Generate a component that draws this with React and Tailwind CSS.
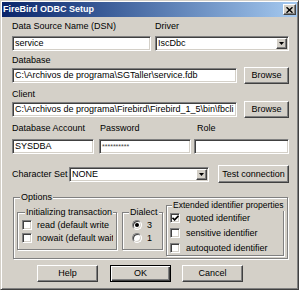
import React from "react";

const sunken =
  "bg-white border border-t-[#808080] border-l-[#808080] border-r-white border-b-white shadow-[inset_1px_1px_0_#404040,inset_-1px_-1px_0_#d4d0c8]";
const raised =
  "bg-[#d4d0c8] border border-t-white border-l-white border-r-[#404040] border-b-[#404040] shadow-[inset_-1px_-1px_0_#808080]";
const etched =
  "relative border border-[#808080] shadow-[inset_1px_1px_0_#ffffff,1px_1px_0_#ffffff]";

function TextBox({ className = "", children }) {
  return (
    <div className={`${sunken} min-w-0 h-[15px] flex items-center pl-[2px] overflow-hidden whitespace-nowrap ${className}`}>
      {children}
    </div>
  );
}

function Arrow() {
  return (
    <svg width="5" height="3" viewBox="0 0 5 3">
      <polygon points="0,0 5,0 2.5,3" fill="#000" />
    </svg>
  );
}

function Combo({ className = "", children }) {
  return (
    <div className={`${sunken} min-w-0 h-[15px] flex items-center pl-[2px] pr-[1px] ${className}`}>
      <span className="flex-1 min-w-0 overflow-hidden whitespace-nowrap">{children}</span>
      <div className={`${raised} w-[11px] h-[11px] flex items-center justify-center`}>
        <Arrow />
      </div>
    </div>
  );
}

function Button({ className = "", children }) {
  return (
    <div className={`${raised} flex items-center justify-center whitespace-nowrap ${className}`}>{children}</div>
  );
}

function Check({ checked }) {
  return (
    <div className={`${sunken} w-[10px] h-[10px] shrink-0 flex items-center justify-center`}>
      {checked && (
        <svg width="7" height="6" viewBox="0 0 7 6">
          <path d="M0.5 2.8 L2.6 4.9 L6.5 0.8" stroke="#000" strokeWidth="1.6" fill="none" />
        </svg>
      )}
    </div>
  );
}

function Radio({ checked }) {
  return (
    <div className="w-[10px] h-[10px] shrink-0 rounded-full bg-white border border-t-[#808080] border-l-[#808080] border-r-white border-b-white shadow-[inset_1px_1px_0_#404040,inset_-1px_-1px_0_#d4d0c8] flex items-center justify-center">
      {checked && <div className="w-[4px] h-[4px] rounded-full bg-black" />}
    </div>
  );
}

function Legend({ className = "", children }) {
  return (
    <span className={`absolute top-[-6px] px-[1px] bg-[#d4d0c8] whitespace-nowrap leading-[11px] ${className}`}>
      {children}
    </span>
  );
}

export default function App() {
  return (
    <div className="w-[300px] h-[293px] bg-white font-['Liberation_Sans',Arial,sans-serif] text-[9px] leading-[11px] text-black">
      <div className="w-[299px] h-[290px] bg-[#d4d0c8] border border-t-[#d4d0c8] border-l-[#d4d0c8] border-r-[#404040] border-b-[#404040] shadow-[inset_1px_1px_0_#ffffff,inset_-1px_-1px_0_#808080] p-[1px] flex flex-col">
        {/* Title bar */}
        <div className="h-[15px] bg-linear-to-r from-[#0a246a] to-[#a6caf0] flex items-center justify-between pl-[1px] pr-[1px]">
          <span className="text-white font-bold">FireBird ODBC Setup</span>
          <div className={`${raised} w-[13px] h-[11px] flex items-center justify-center`}>
            <svg width="7" height="6" viewBox="0 0 7 6">
              <path d="M0.5 0.3 L6.5 5.7 M6.5 0.3 L0.5 5.7" stroke="#000" strokeWidth="1.5" />
            </svg>
          </div>
        </div>

        {/* Content */}
        <div className="pl-[10px] pr-[8px] flex flex-col">
          <div className="mt-[4px] flex h-[11px]">
            <span className="w-[143px]">Data Source Name (DSN)</span>
            <span>Driver</span>
          </div>
          <div className="mt-[4px] flex">
            <TextBox className="w-[139px]">service</TextBox>
            <Combo className="ml-[4px] flex-1">IscDbc</Combo>
          </div>

          <div className="mt-[4px] h-[11px]">Database</div>
          <div className="mt-[1px] flex items-center h-[17px]">
            <TextBox className="flex-1">C:\Archivos de programa\SGTaller\service.fdb</TextBox>
            <Button className="ml-[7px] w-[45px] shrink-0 h-[17px]">Browse</Button>
          </div>

          <div className="mt-[5px] h-[11px]">Client</div>
          <div className="mt-[1px] flex items-center h-[17px]">
            <TextBox className="flex-1">C:\Archivos de programa\Firebird\Firebird_1_5\bin\fbcli</TextBox>
            <Button className="ml-[7px] w-[45px] shrink-0 h-[17px]">Browse</Button>
          </div>

          <div className="mt-[5px] flex h-[11px]">
            <span className="w-[88px]">Database Account</span>
            <span className="w-[97px]">Password</span>
            <span>Role</span>
          </div>
          <div className="mt-[5px] flex">
            <TextBox className="w-[82px]">SYSDBA</TextBox>
            <TextBox className="ml-[5px] w-[92px] text-[7px] text-[#404040]">**********</TextBox>
            <TextBox className="ml-[3px] flex-1"></TextBox>
          </div>

          <div className="mt-[11px] flex items-center h-[18px]">
            <span className="w-[57px]">Character Set</span>
            <Combo className="w-[140px]">NONE</Combo>
            <Button className="ml-[9px] flex-1 h-[18px]">Test connection</Button>
          </div>

          {/* Options */}
          <div className={`${etched} mt-[14px] ml-[1px] w-[275px] h-[62px]`}>
            <Legend className="left-[6px]">Options</Legend>
            <div className="flex items-start pl-[3px] pt-[7px]">
              <div className={`${etched} mt-[7px] w-[100px] h-[38px]`}>
                <Legend className="left-[7px]">Initializing transaction</Legend>
                <div className="flex flex-col pt-[7px] pl-[4px] gap-[3px]">
                  <div className="flex items-center h-[10px]">
                    <Check />
                    <span className="ml-[5px] w-[76px] overflow-hidden whitespace-nowrap">read (default write</span>
                  </div>
                  <div className="flex items-center h-[10px]">
                    <Check />
                    <span className="ml-[5px] w-[76px] overflow-hidden whitespace-nowrap">nowait (default wait</span>
                  </div>
                </div>
              </div>

              <div className={`${etched} ml-[5px] mt-[7px] w-[41px] h-[38px]`}>
                <Legend className="left-[6px]">Dialect</Legend>
                <div className="flex flex-col pt-[7px] pl-[9px] gap-[3px]">
                  <div className="flex items-center h-[10px]">
                    <Radio checked />
                    <span className="ml-[5px]">3</span>
                  </div>
                  <div className="flex items-center h-[10px]">
                    <Radio />
                    <span className="ml-[5px]">1</span>
                  </div>
                </div>
              </div>

              <div className={`${etched} ml-[3px] w-[118px] h-[51px]`}>
                <Legend className="left-[5px] text-[8.5px]">Extended identifier properties</Legend>
                <div className="flex flex-col pt-[7px] pl-[3px] gap-[5px]">
                  <div className="flex items-center h-[10px]">
                    <Check checked />
                    <span className="ml-[6px] whitespace-nowrap">quoted identifier</span>
                  </div>
                  <div className="flex items-center h-[10px]">
                    <Check />
                    <span className="ml-[6px] whitespace-nowrap">sensitive identifier</span>
                  </div>
                  <div className="flex items-center h-[10px]">
                    <Check />
                    <span className="ml-[6px] whitespace-nowrap">autoquoted identifier</span>
                  </div>
                </div>
              </div>
            </div>
          </div>

          {/* Buttons */}
          <div className="mt-[6px] flex h-[17px]">
            <Button className="ml-[25px] w-[61px] h-[17px]">Help</Button>
            <div className="ml-[12px] w-[61px] h-[17px] border border-black bg-[#d4d0c8] shadow-[inset_1px_1px_0_#ffffff,inset_-1px_-1px_0_#404040,inset_-2px_-2px_0_#808080] flex items-center justify-center">
              OK
            </div>
            <Button className="ml-[11px] w-[61px] h-[17px]">Cancel</Button>
          </div>
        </div>
      </div>
    </div>
  );
}
